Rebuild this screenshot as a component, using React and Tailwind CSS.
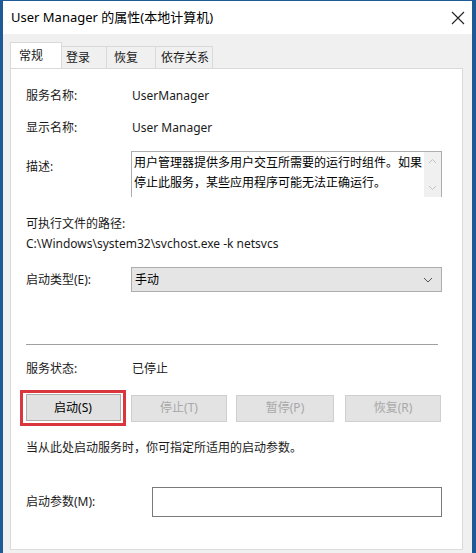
import React from "react";

const F = { fontFamily: '"Noto Sans", "Noto Sans CJK SC", sans-serif' };

function Tab({ label, active, cls }) {
  return active ? (
    <div className="h-[26px] pl-[8px] flex items-center bg-white border border-[#d9d9d9] border-b-0 -mb-px relative z-10 w-[52px]">
      <span>{label}</span>
    </div>
  ) : (
    <div className={"h-[22px] mt-[4px] flex items-center bg-[#f0f0f0] border border-[#d9d9d9] border-l-0 border-b-0 " + cls}>
      <span>{label}</span>
    </div>
  );
}

function Btn({ label, disabled, w = "w-[96px]" }) {
  return (
    <div
      className={
        w +
        " h-[27px] flex items-center justify-center border " +
        (disabled
          ? "bg-[#e3e3e3] border-[#cfcfcf] text-[#a8a8a8]"
          : "bg-[#e1e1e1] border-[#adadad] text-black")
      }
    >
      {label}
    </div>
  );
}

export default function App() {
  return (
    <div
      className="w-[476px] h-[553px] bg-[#1e5a96] pl-[3px] pr-[4px] pt-[1px] overflow-hidden text-[12px] text-[#1a1a1a]"
      style={F}
    >
      <div className="w-[469px] h-[552px] bg-[#f0f0f0] flex flex-col">
        {/* title bar */}
        <div className="h-[33px] bg-white flex items-center justify-between pl-[8px] pr-[7px] shrink-0">
          <span className="text-[13px] text-black">User Manager 的属性(本地计算机)</span>
          <svg width="14" height="14" viewBox="0 0 14 14">
            <path d="M1 1 L13 13 M13 1 L1 13" stroke="#222" strokeWidth="1.1" />
          </svg>
        </div>
        {/* tabs */}
        <div className="flex pl-[7px] pt-[8px]">
          <Tab label="常规" active />
          <Tab label="登录" cls="w-[45px] pl-[4px]" />
          <Tab label="恢复" cls="w-[49px] pl-[7px]" />
          <Tab label="依存关系" cls="w-[57px] pl-[5px]" />
        </div>
        {/* panel */}
        <div className="ml-[7px] w-[453px] flex-1 bg-white border border-[#d9d9d9] border-b-[#dcdcdc] mb-[3px] pl-[15px] pr-[20px] flex flex-col">
          <div className="mt-[19px] flex items-center h-[16px]">
            <span className="w-[106px]">服务名称:</span>
            <span>UserManager</span>
          </div>
          <div className="mt-[16px] flex items-center h-[16px]">
            <span className="w-[106px]">显示名称:</span>
            <span>User Manager</span>
          </div>
          <div className="mt-[15px] flex">
            <span className="w-[105px] pt-[7px]">描述:</span>
            <div className="w-[311px] h-[46px] border border-[#adadad] border-b-0 flex">
              <div className="flex-1 pl-[2px] pt-[1px] leading-[20px] text-black">
                用户管理器提供多用户交互所需要的运行时组件。如果停止此服务，某些应用程序可能无法正确运行。
              </div>
              <div className="w-[17px] bg-[#f0f0f0] flex flex-col items-center justify-between py-[6px]">
                <svg width="9" height="6" viewBox="0 0 9 6">
                  <path d="M1 5 L4.5 1.5 L8 5" stroke="#c2c2c2" strokeWidth="1" fill="none" />
                </svg>
                <svg width="9" height="6" viewBox="0 0 9 6">
                  <path d="M1 1 L4.5 4.5 L8 1" stroke="#c2c2c2" strokeWidth="1" fill="none" />
                </svg>
              </div>
            </div>
          </div>
          <div className="mt-[19px] h-[16px] flex items-center">可执行文件的路径:</div>
          <div className="mt-[4px] h-[16px] flex items-center">C:\Windows\system32\svchost.exe -k netsvcs</div>
          <div className="mt-[15px] flex items-center">
            <span className="w-[105px]">启动类型(E):</span>
            <div className="w-[311px] h-[25px] bg-[#e5e5e5] border border-[#adadad] flex items-center justify-between pl-[3px] pr-[8px] text-black">
              <span>手动</span>
              <svg width="10" height="6" viewBox="0 0 10 6">
                <path d="M1 1 L5 5 L9 1" stroke="#555" strokeWidth="1" fill="none" />
              </svg>
            </div>
          </div>
          <div className="mt-[52px] h-px bg-[#a0a0a0] w-[412px]" />
          <div className="mt-[16px] flex items-center h-[16px]">
            <span className="w-[106px]">服务状态:</span>
            <span>已停止</span>
          </div>
          <div className="mt-[13px] flex items-center">
            <div className="-ml-[6px] border-[3px] border-[#d9363e] pl-px pr-px pt-px pb-[4px] w-[106px] h-[36px] flex items-start justify-center">
              <Btn label="启动(S)" w="w-[95px]" />
            </div>
            <div className="ml-[5px] flex">
              <Btn label="停止(T)" disabled />
              <div className="ml-[9px]">
                <Btn label="暂停(P)" disabled w="w-[98px]" />
              </div>
              <div className="ml-[11px]">
                <Btn label="恢复(R)" disabled />
              </div>
            </div>
          </div>
          <div className="mt-[14px] h-[16px] flex items-center">当从此处启动服务时，你可指定所适用的启动参数。</div>
          <div className="mt-[31px] flex items-center">
            <span className="w-[126px]">启动参数(M):</span>
            <div className="w-[291px] h-[30px] border border-[#7a7a7a] bg-white" />
          </div>
        </div>
      </div>
    </div>
  );
}
